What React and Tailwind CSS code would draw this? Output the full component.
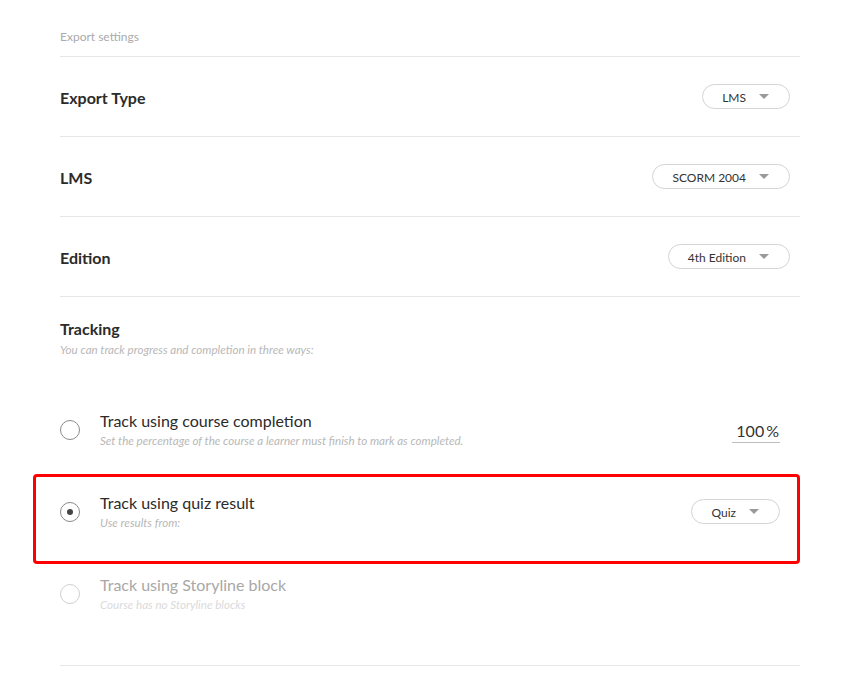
import React from "react";

const Caret = () => (
  <svg width="10" height="5" viewBox="0 0 10 5" className="shrink-0">
    <path d="M0 0 L10 0 L5 5 Z" fill="#9a9a9a" />
  </svg>
);

const Dropdown = ({ label }) => (
  <div className="flex items-center h-[25px] rounded-full border border-[#d4d4d4] pl-[19px] pr-[20px] gap-[13px] bg-white">
    <span className="text-[12px] leading-[14px] text-[#333] translate-y-[1px]">{label}</span>
    <Caret />
  </div>
);

const Row = ({ title, value }) => (
  <div className="flex items-center justify-between h-[80px] border-b border-[#e6e6e6] pr-[10px]">
    <span className="text-[16px] leading-[20px] font-bold text-[#2b2b2b] translate-y-[1px]">{title}</span>
    <Dropdown label={value} />
  </div>
);

const Radio = ({ checked, disabled }) => (
  <div
    className={
      "mt-[9px] w-[20px] h-[20px] rounded-full border-[1.5px] flex items-center justify-center shrink-0 " +
      (disabled ? "border-[#d0d0d0]" : "border-[#8a8a8a]")
    }
  >
    {checked && <div className="w-[6px] h-[6px] rounded-full bg-[#444]" />}
  </div>
);

export default function App() {
  return (
    <div
      className="w-[866px] h-[673px] bg-white overflow-hidden"
      style={{ fontFamily: "Lato, 'Open Sans', sans-serif" }}
    >
      <div className="ml-[60px] w-[740px]">
        <div className="pt-[28px] pb-[10px] border-b border-[#e6e6e6]">
          <div className="text-[12px] leading-[18px] text-[#aaa]">Export settings</div>
        </div>
        <Row title="Export Type" value="LMS" />
        <Row title="LMS" value="SCORM 2004" />
        <Row title="Edition" value="4th Edition" />

        <div className="pt-[22px]">
          <div className="text-[16px] leading-[20px] font-bold text-[#2b2b2b]">Tracking</div>
          <div className="mt-[4px] text-[11.6px] leading-[14px] italic text-[#b8b8b8]">
            You can track progress and completion in three ways:
          </div>
        </div>

        <div className="mt-[38px]">
          {/* option 1 */}
          <div className="flex items-start h-[79px] pt-[16px] pr-[20px]">
            <Radio />
            <div className="ml-[20px] flex-1">
              <div className="text-[16px] leading-[20px] text-[#2b2b2b]">Track using course completion</div>
              <div className="mt-[3px] text-[11.6px] leading-[14px] italic text-[#b8b8b8]">
                Set the percentage of the course a learner must finish to mark as completed.
              </div>
            </div>
            <div className="mt-[9px] w-[48px] border-b border-[#bdbdbd] text-right text-[16px] leading-[22px] text-[#333] pr-[1px]">
              100<span className="ml-[2px]">%</span>
            </div>
          </div>

          {/* option 2 highlighted */}
          <div className="-ml-[27px] border-[3px] border-[#ff0000] rounded-[4px] h-[90px] pl-[24px] pr-[17px] pt-[16px] flex items-start">
            <Radio checked />
            <div className="ml-[20px] flex-1">
              <div className="text-[16px] leading-[20px] text-[#2b2b2b]">Track using quiz result</div>
              <div className="mt-[3px] text-[11.6px] leading-[14px] italic text-[#b8b8b8]">Use results from:</div>
            </div>
            <div className="mt-[6px]">
              <Dropdown label="Quiz" />
            </div>
          </div>

          {/* option 3 */}
          <div className="flex items-start h-[102px] pt-[11px] border-b border-[#e6e6e6]">
            <Radio disabled />
            <div className="ml-[20px] flex-1">
              <div className="text-[16px] leading-[20px] text-[#a8a8a8]">Track using Storyline block</div>
              <div className="mt-[3px] text-[11.6px] leading-[14px] italic text-[#dadada]">Course has no Storyline blocks</div>
            </div>
          </div>
        </div>
      </div>
    </div>
  );
}
